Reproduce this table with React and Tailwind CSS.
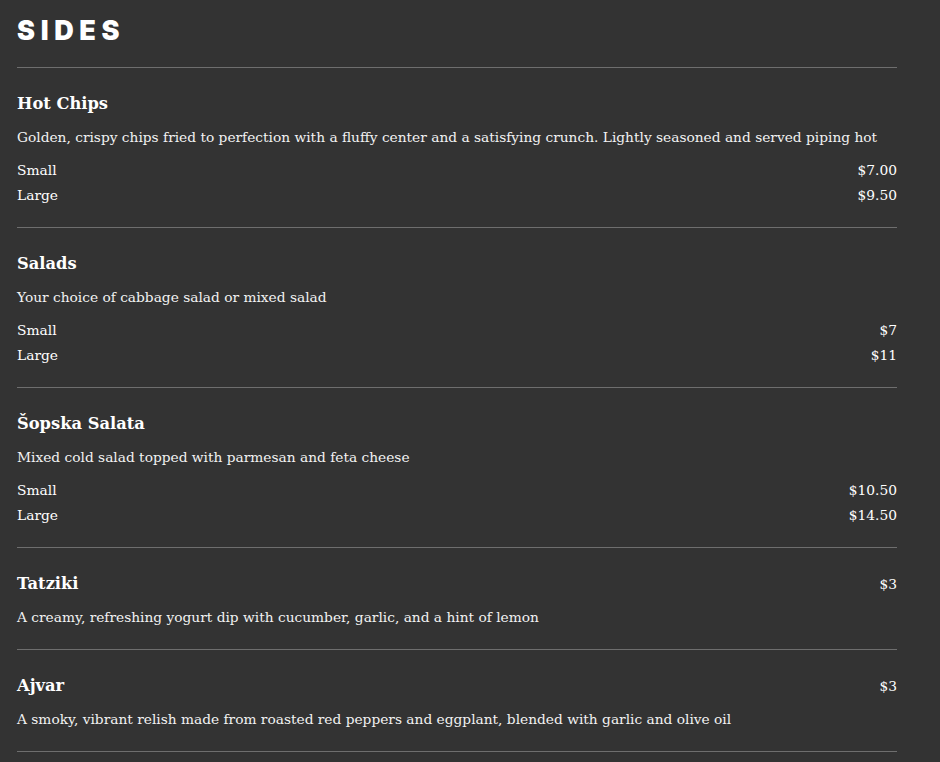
import React from 'react';

const sides = [
  {
    name: 'Hot Chips',
    description:
      'Golden, crispy chips fried to perfection with a fluffy center and a satisfying crunch. Lightly seasoned and served piping hot',
    prices: [
      { size: 'Small', price: '$7.00' },
      { size: 'Large', price: '$9.50' },
    ],
  },
  {
    name: 'Salads',
    description: 'Your choice of cabbage salad or mixed salad',
    prices: [
      { size: 'Small', price: '$7' },
      { size: 'Large', price: '$11' },
    ],
  },
  {
    name: 'Šopska Salata',
    description: 'Mixed cold salad topped with parmesan and feta cheese',
    prices: [
      { size: 'Small', price: '$10.50' },
      { size: 'Large', price: '$14.50' },
    ],
  },
  {
    name: 'Tatziki',
    description: 'A creamy, refreshing yogurt dip with cucumber, garlic, and a hint of lemon',
    price: '$3',
  },
  {
    name: 'Ajvar',
    description:
      'A smoky, vibrant relish made from roasted red peppers and eggplant, blended with garlic and olive oil',
    price: '$3',
  },
];

function MenuItem({ item }) {
  return (
    <div
      className={`border-b border-[#6e6e6e] pt-[24px] ${item.prices ? 'pb-[19px]' : 'pb-[21px]'}`}
    >
      <div className="flex justify-between items-center h-[24px]">
        <h3 className="text-[16.3px] font-bold text-white">{item.name}</h3>
        {item.price && <span className="text-[13.8px] text-white">{item.price}</span>}
      </div>
      <p className="mt-[10px] leading-[22px] text-[13.75px] text-[#f2f2f2] whitespace-nowrap">
        {item.description}
      </p>
      {item.prices && (
        <ul className="mt-[10px]">
          {item.prices.map((p) => (
            <li key={p.size} className="flex justify-between leading-[25px] text-[13.8px] text-white">
              <span>{p.size}</span>
              <span>{p.price}</span>
            </li>
          ))}
        </ul>
      )}
    </div>
  );
}

export default function App() {
  return (
    <div className="min-h-screen bg-[#333333] pl-[17px] font-['DejaVu_Serif',serif]">
      <div className="w-[880px]">
        <div className="border-b border-[#6e6e6e] h-[68px] pt-[15px]">
          <h2 className="font-['Inter',sans-serif] font-black text-[27px] leading-[32px] tracking-[0.21em] text-white">
            SIDES
          </h2>
        </div>
        {sides.map((item) => (
          <MenuItem key={item.name} item={item} />
        ))}
      </div>
    </div>
  );
}
